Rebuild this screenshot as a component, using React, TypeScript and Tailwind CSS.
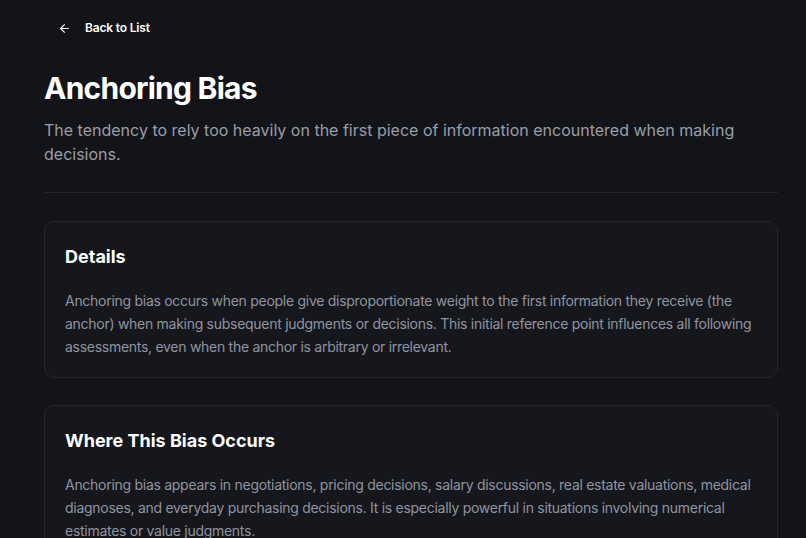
import { ArrowLeft } from "lucide-react"

const sections = [
  {
    title: "Details",
    body: "Anchoring bias occurs when people give disproportionate weight to the first information they receive (the anchor) when making subsequent judgments or decisions. This initial reference point influences all following assessments, even when the anchor is arbitrary or irrelevant.",
  },
  {
    title: "Where This Bias Occurs",
    body: "Anchoring bias appears in negotiations, pricing decisions, salary discussions, real estate valuations, medical diagnoses, and everyday purchasing decisions. It is especially powerful in situations involving numerical estimates or value judgments.",
  },
]

export default function App() {
  return (
    <div
      className="min-h-screen bg-[#121419] pl-[44px] pr-[28px] pt-[14px] pb-10 text-white"
      style={{ fontFamily: "Inter, 'Noto Sans', sans-serif" }}
    >
      <button className="flex h-[28px] items-center gap-[14px] rounded-md px-[14px] text-[12px] font-semibold tracking-[-0.015em] text-white">
        <ArrowLeft className="h-[13px] w-[13px]" strokeWidth={2} />
        Back to List
      </button>

      <header className="mt-[28px] border-b border-[#23252b] pb-[26px]">
        <h1 className="text-[30px] font-bold leading-[36px] tracking-tight">
          Anchoring Bias
        </h1>
        <p className="mt-[12px] text-[16px] leading-[24px] text-[#9a9ea6]">
          The tendency to rely too heavily on the first piece of information
          encountered when making decisions.
        </p>
      </header>

      <div className="mt-[28px] flex flex-col gap-[27px]">
        {sections.map((s) => (
          <section
            key={s.title}
            className="rounded-[10px] border border-[#25272d] bg-[#15171c] px-5 pt-[21px] pb-[19px]"
          >
            <h2 className="text-[18px] font-bold leading-[28px]">
              {s.title}
            </h2>
            <p className="mt-[18px] text-[14px] leading-[23px] tracking-[-0.02em] text-[#9094a0]">
              {s.body}
            </p>
          </section>
        ))}
      </div>
    </div>
  )
}
